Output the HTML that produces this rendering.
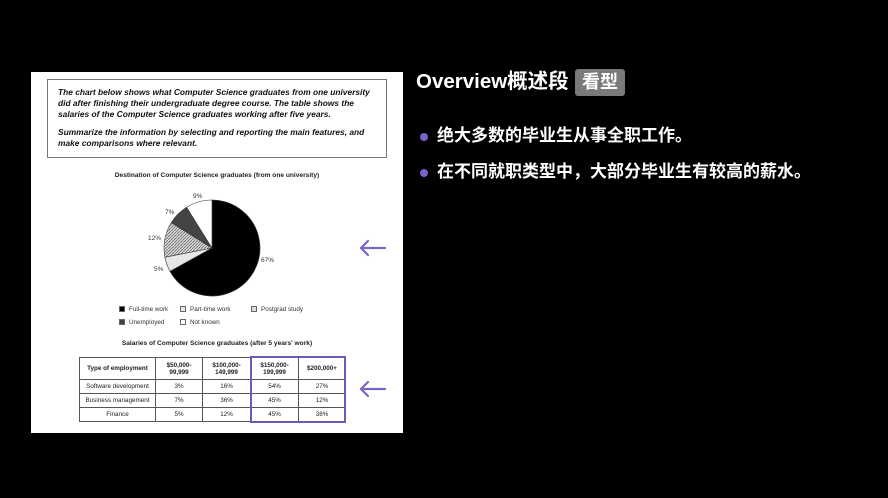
<!DOCTYPE html>
<html><head><meta charset="utf-8"><style>
*{margin:0;padding:0;box-sizing:border-box}
body{width:888px;height:498px;background:#000;position:relative;overflow:hidden;font-family:"Liberation Sans",Arial,sans-serif}
.panel{position:absolute;left:31px;top:72px;width:372px;height:361px;background:#fff}
.box{position:absolute;left:16px;top:7px;width:340px;height:79px;border:1px solid #777;padding:7px 10px;font-size:8.4px;font-weight:bold;font-style:italic;line-height:11px;color:#111}
.box p+p{margin-top:7px}
.t{position:absolute;width:372px;text-align:center;font-size:6.6px;font-weight:bold;color:#222}
.lg{position:absolute;font-size:6.3px;color:#333}
.lg i{display:inline-block;width:6px;height:6px;border:1px solid #666;vertical-align:-1px;margin-right:4px}
table{position:absolute;left:48px;top:285px;border-collapse:collapse;font-size:6.3px;color:#222}
td{border:1px solid #555;text-align:center;height:14px;padding:0}
tr:first-child td{height:22px;font-weight:bold;line-height:7px}
.cn{font-family:"Liberation Sans","Noto Sans CJK SC",sans-serif;color:#fff;position:absolute;font-weight:bold;white-space:nowrap}
.dot{position:absolute;width:8px;height:8px;border-radius:50%;background:#7c63c9}
</style></head><body>
<div class="panel">
<div class="box"><p>The chart below shows what Computer Science graduates from one university did after finishing their undergraduate degree course. The table shows the salaries of the Computer Science graduates working after five years.</p><p>Summarize the information by selecting and reporting the main features, and make comparisons where relevant.</p></div>
<div class="t" style="top:100px">Destination of Computer Science graduates (from one university)</div>
<svg style="position:absolute;left:0;top:0" width="372" height="361" viewBox="31 72 372 361">
<defs><pattern id="h" width="3" height="3" patternUnits="userSpaceOnUse"><rect width="3" height="3" fill="#ddd"/><path d="M0 3L3 0" stroke="#666" stroke-width="0.8"/></pattern></defs>
<g stroke="#333" stroke-width="0.6">
<path d="M212 248L212 200A48 48 0 1 1 170 271.3Z" fill="#000"/>
<path d="M212 248L170 271.3A48 48 0 0 1 164.9 257.2Z" fill="#e6e6e6"/>
<path d="M212 248L164.9 257.2A48 48 0 0 1 171.3 222.6Z" fill="url(#h)"/>
<path d="M212 248L171.3 222.6A48 48 0 0 1 186.6 207.3Z" fill="#444"/>
<path d="M212 248L186.6 207.3A48 48 0 0 1 212 200Z" fill="#fff"/>
</g>
<g font-size="6.5" fill="#333" font-family="Liberation Sans">
<text x="193" y="198">9%</text><text x="165" y="214">7%</text><text x="148" y="240">12%</text><text x="154" y="271">5%</text><text x="261" y="262">67%</text>
</g>
</svg>
<div class="lg" style="left:88px;top:234px"><i style="background:#000"></i>Full-time work</div>
<div class="lg" style="left:149px;top:234px"><i style="background:#e6e6e6"></i>Part-time work</div>
<div class="lg" style="left:220px;top:234px"><i style="background:#ddd"></i>Postgrad study</div>
<div class="lg" style="left:88px;top:247px"><i style="background:#444"></i>Unemployed</div>
<div class="lg" style="left:149px;top:247px"><i style="background:#fff"></i>Not known</div>
<div class="t" style="top:268px">Salaries of Computer Science graduates (after 5 years' work)</div>
<table>
<tr><td style="width:76px">Type of employment</td><td style="width:47px">$50,000-<br>99,999</td><td style="width:48px">$100,000-<br>149,999</td><td style="width:48px">$150,000-<br>199,999</td><td style="width:47px">$200,000+</td></tr>
<tr><td>Software development</td><td>3%</td><td>16%</td><td>54%</td><td>27%</td></tr>
<tr><td>Business management</td><td>7%</td><td>36%</td><td>45%</td><td>12%</td></tr>
<tr><td>Finance</td><td>5%</td><td>12%</td><td>45%</td><td>38%</td></tr>
</table>
<div style="position:absolute;left:219px;top:284px;width:96px;height:67px;border:2px solid #6f58b8"></div>
</div>
<svg style="position:absolute;left:358px;top:238px" width="30" height="20"><path d="M27 10H3M10 3L3 10L10 17" fill="none" stroke="#7c63c9" stroke-width="2.2" stroke-linecap="round" stroke-linejoin="round"/></svg>
<svg style="position:absolute;left:358px;top:379px" width="30" height="20"><path d="M27 10H3M10 3L3 10L10 17" fill="none" stroke="#7c63c9" stroke-width="2.2" stroke-linecap="round" stroke-linejoin="round"/></svg>
<div class="cn" style="left:416px;top:69px;font-size:20.5px;line-height:26px">Overview概述段</div>
<div class="cn" style="left:575px;top:69px;width:50px;height:27px;background:#7a7a7a;border-radius:3px;font-size:18px;line-height:27px;text-align:center">看型</div>
<div class="dot" style="left:420px;top:133px"></div>
<div class="cn" style="left:437px;top:125px;font-size:17px;line-height:22px">绝大多数的毕业生从事全职工作。</div>
<div class="dot" style="left:420px;top:169px"></div>
<div class="cn" style="left:437px;top:161px;font-size:17px;line-height:22px">在不同就职类型中，大部分毕业生有较高的薪水。</div>
</body></html>
